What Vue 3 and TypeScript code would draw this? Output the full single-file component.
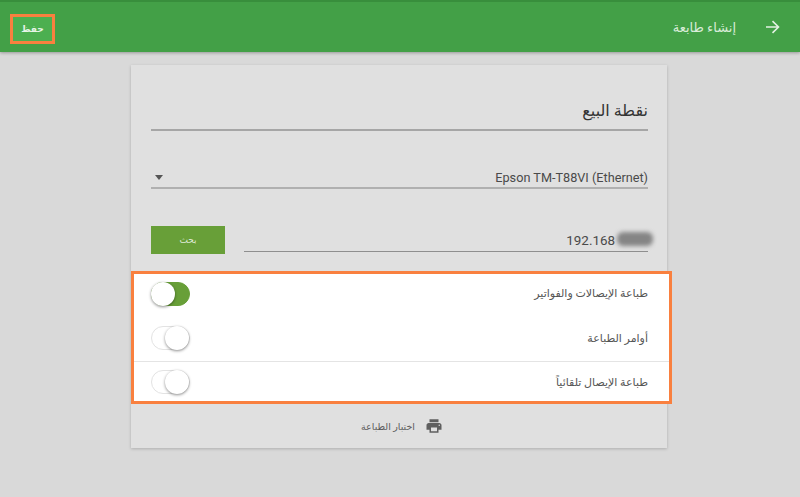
<script setup lang="ts">
interface Row { label: string; on: boolean }
const rows: Row[] = [
  { label: 'طباعة الإيصالات والفواتير', on: true },
  { label: 'أوامر الطباعة', on: false },
  { label: 'طباعة الإيصال تلقائياً', on: false },
]
</script>

<template>
  <div class="page" dir="rtl">
    <header class="bar">
      <div class="bar-start">
        <svg width="16" height="16" viewBox="0 0 16 16" fill="none" stroke="#e4f1e4" stroke-width="1.6">
          <path d="M2 8H14.5M8.5 2.2L14.5 8L8.5 13.8" />
        </svg>
        <span class="title">إنشاء طابعة</span>
      </div>
      <button class="save">حفظ</button>
    </header>
    <main class="card">
      <div class="field name"><span>نقطة البيع</span></div>
      <div class="field select">
        <span dir="ltr">Epson TM-T88VI (Ethernet)</span>
        <i class="caret"></i>
      </div>
      <div class="ip-row">
        <div class="field ip">
          <span dir="ltr">192.168</span>
          <i class="blob"></i>
        </div>
        <button class="search">بحث</button>
      </div>
      <section class="options">
        <div v-for="(r, i) in rows" :key="i" class="opt" :class="{ first: i === 0, ruled: i === 2 }">
          <span class="opt-label">{{ r.label }}</span>
          <span class="toggle" :class="{ on: r.on }"><i class="knob"></i></span>
        </div>
      </section>
      <footer class="foot">
        <svg width="18" height="18" viewBox="0 0 24 24" fill="#5f5f5f">
          <path d="M19 8H5c-1.66 0-3 1.34-3 3v6h4v4h12v-4h4v-6c0-1.66-1.34-3-3-3zm-3 11H8v-5h8v5zm3-7c-.55 0-1-.45-1-1s.45-1 1-1 1 .45 1 1-.45 1-1 1zm-1-9H6v4h12V3z" />
        </svg>
        <span>اختبار الطباعة</span>
      </footer>
    </main>
  </div>
</template>

<style>
html, body { margin: 0; background: #d9d9d9; }
</style>

<style scoped>
.page {
  width: 800px;
  height: 497px;
  overflow: hidden;
  background: #d9d9d9;
  font-family: Roboto, "DejaVu Sans", sans-serif;
  color: #4a4a4a;
}
.bar {
  height: 52px;
  box-sizing: border-box;
  padding: 0 0 0 10px;
  background: #43a047;
  border-top: 2px solid #388e3c;
  box-shadow: 0 1px 3px rgba(0, 0, 0, .3);
  display: flex;
  align-items: center;
  justify-content: space-between;
}
.bar-start { display: flex; align-items: center; gap: 28px; padding-right: 20px; }
.title { font-size: 13px; color: #d9ecd9; }
.save {
  width: 45px;
  height: 30px;
  margin-top: 4px;
  padding: 0;
  background: #4caf50;
  border: 3px solid #f9803f;
  color: #e8f5e8;
  font: 700 9px "DejaVu Sans", sans-serif;
}
.card {
  width: 536px;
  height: 383px;
  margin: 13px 133px 0 0;
  box-sizing: border-box;
  padding-top: 1px;
  background: #e0e0e0;
  box-shadow: 0 1px 3px rgba(0, 0, 0, .2);
  display: flex;
  flex-direction: column;
}
.field {
  position: relative;
  display: flex;
  align-items: center;
  justify-content: space-between;
  margin: 0 19px 0 20px;
  border-bottom: 1px solid #9e9e9e;
  box-sizing: border-box;
}
.name {
  height: 65px;
  padding-top: 26px;
  font-size: 16px;
  color: #333;
  border-bottom: 2px solid #a6a6a6;
}
.select {
  height: 58px;
  padding-top: 37px;
  font-size: 12.7px;
  border-bottom: 2px solid #b0b0b0;
}
.caret {
  margin-left: 4px;
  border: 4px solid transparent;
  border-top: 5px solid #555;
  border-bottom: 0;
}
.ip-row {
  display: flex;
  align-items: flex-end;
  justify-content: space-between;
  height: 65px;
  margin: 0 19px 0 20px;
}
.ip {
  width: 404px;
  margin: 0 0 2px;
  height: 22px;
  padding-right: 33px;
  font-size: 13.4px;
  border-bottom: 1px solid #8f8f8f;
}
.blob {
  position: absolute;
  right: -5px;
  top: 2px;
  width: 36px;
  height: 14px;
  border-radius: 6px;
  background: #858585;
  filter: blur(2px);
}
.search {
  width: 74px;
  height: 28px;
  padding: 0;
  border: 0;
  background: #689f38;
  color: #dfead6;
  font: 9px "DejaVu Sans", sans-serif;
}
.options {
  margin: 17px -5px 0 0;
  height: 133px;
  box-sizing: border-box;
  background: #fff;
  border: 3px solid #f9803f;
}
.opt {
  height: 43.5px;
  box-sizing: border-box;
  padding: 0 21px 2px 16.5px;
  display: flex;
  align-items: center;
  justify-content: space-between;
  font-size: 11px;
  color: #555;
}
.first { padding-bottom: 4px; }
.ruled { border-top: 1px solid #e4e4e4; }
.toggle {
  position: relative;
  width: 39px;
  height: 24px;
  border-radius: 12px;
  box-sizing: border-box;
  border: 1px solid #e3e3e3;
  background: #fff;
  display: block;
}
.knob {
  position: absolute;
  left: 13.5px;
  top: -1px;
  width: 24px;
  height: 24px;
  border-radius: 50%;
  background: #fff;
  box-shadow: 0 1px 3px rgba(0, 0, 0, .45);
}
.toggle.on { background: #689f38; border-color: #689f38; }
.toggle.on .knob { left: -1px; }
.foot {
  flex: 1;
  display: flex;
  align-items: center;
  justify-content: center;
  gap: 10px;
  padding-left: 6px;
  font-size: 9.5px;
  color: #5c5c5c;
}
</style>
